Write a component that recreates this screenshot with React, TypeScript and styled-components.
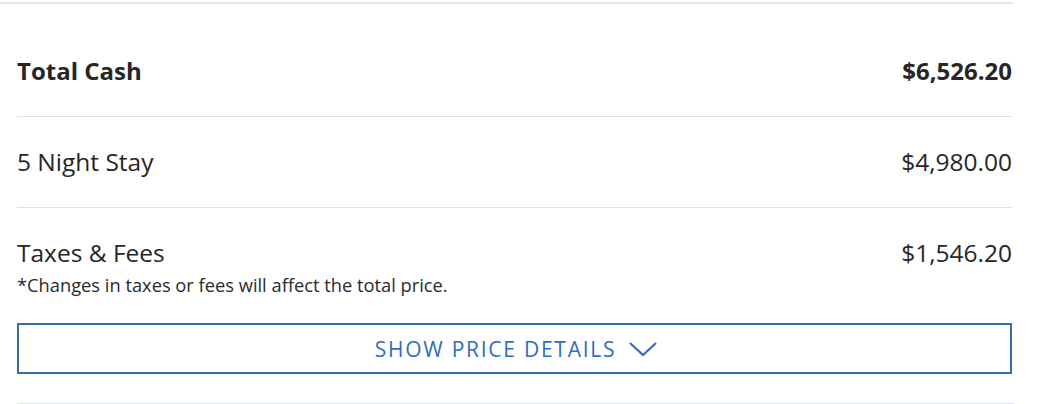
import React from "react";
import styled, { createGlobalStyle } from "styled-components";

const GlobalStyle = createGlobalStyle`
  body {
    margin: 0;
    background: #ffffff;
    font-family: "Open Sans", "Noto Sans", Arial, sans-serif;
    color: #262626;
  }
`;

const lines = [
  { label: "5 Night Stay", amount: "$4,980.00" },
];

const Wrapper = styled.div`
  width: 1013px;
  margin-top: 2px;
  padding-top: 0;
  border-top: 2px solid #dde6ef;
`;

const Content = styled.div`
  margin-left: 17px;
  width: 995px;
`;

const Row = styled.div<{ $first?: boolean }>`
  display: flex;
  justify-content: space-between;
  align-items: flex-start;
  padding: ${(p) => (p.$first ? "51px 0 29px" : "29px 0")};
  border-bottom: 1px solid #d6e2ea;
`;

const Label = styled.div<{ $bold?: boolean }>`
  font-size: ${(p) => (p.$bold ? "24px" : "24.5px")};
  line-height: 32px;
  font-weight: ${(p) => (p.$bold ? 700 : 400)};
  color: #262626;
`;

const Amount = styled(Label)``;

const TaxBlock = styled.div`
  padding-top: 29px;
`;

const TaxHead = styled.div`
  display: flex;
  justify-content: space-between;
`;

const Note = styled.div`
  font-size: 18.3px;
  line-height: 24px;
  margin-top: 4px;
  color: #2b2b2b;
`;

const DetailsButton = styled.button`
  margin-top: 26px;
  width: 100%;
  height: 51px;
  border: 2px solid #3b6cb3;
  background: #fff;
  display: flex;
  align-items: center;
  justify-content: center;
  gap: 12px;
  font-family: inherit;
  font-size: 21px;
  letter-spacing: 1.75px;
  color: #2f6cc4;
  cursor: pointer;
  padding: 0 0 0 4px;
`;

const BottomRule = styled.div`
  margin-top: 29px;
  height: 2px;
  background: #dbe2e9;
  width: 997px;
`;

const Chevron = () => (
  <svg width="30" height="16" viewBox="0 0 30 16" fill="none">
    <polyline points="2,2 15,14 28,2" stroke="#2f6cc4" strokeWidth="2.2" />
  </svg>
);

const App = () => {
  return (
    <>
      <GlobalStyle />
      <Wrapper>
        <Content>
          <Row $first>
            <Label $bold>Total Cash</Label>
            <Amount $bold>$6,526.20</Amount>
          </Row>
          {lines.map((item, index) => (
            <Row key={index}>
              <Label>{item.label}</Label>
              <Amount>{item.amount}</Amount>
            </Row>
          ))}
          <TaxBlock>
            <TaxHead>
              <Label>Taxes &amp; Fees</Label>
              <Amount>$1,546.20</Amount>
            </TaxHead>
            <Note>*Changes in taxes or fees will affect the total price.</Note>
          </TaxBlock>
          <DetailsButton>
            SHOW PRICE DETAILS
            <Chevron />
          </DetailsButton>
          <BottomRule />
        </Content>
      </Wrapper>
    </>
  );
};

export default App;
